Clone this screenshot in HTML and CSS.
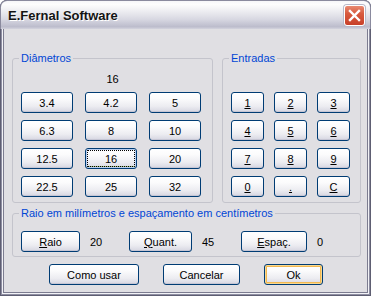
FILE: index.html
```html
<!DOCTYPE html>
<html lang="pt">
<head>
    <meta charset="UTF-8">
    <title>E.Fernal Software</title>
    <link rel="stylesheet" href="styles.css">
</head>
<body>
    <div class="window">
        <!-- Title bar -->
        <div class="titlebar">
            <span class="title">E.Fernal Software</span>
            <button class="close-btn" aria-label="Fechar">
                <svg width="13" height="13" viewBox="0 0 13 13">
                    <path d="M2 2 L11 11 M11 2 L2 11" stroke="#fff" stroke-width="2.4" stroke-linecap="square"/>
                </svg>
            </button>
        </div>

        <div class="client">
            <div class="top-row">
                <!-- Diameters -->
                <div class="group group-diam">
                    <div class="group-label">Diâmetros</div>
                    <div class="current">16</div>
                    <div class="diam-grid">
                        <button class="btn">3.4</button>
                        <button class="btn">4.2</button>
                        <button class="btn">5</button>
                        <button class="btn">6.3</button>
                        <button class="btn">8</button>
                        <button class="btn">10</button>
                        <button class="btn">12.5</button>
                        <button class="btn focused">16</button>
                        <button class="btn">20</button>
                        <button class="btn">22.5</button>
                        <button class="btn">25</button>
                        <button class="btn">32</button>
                    </div>
                </div>

                <!-- Keypad -->
                <div class="group group-keys">
                    <div class="group-label">Entradas</div>
                    <div class="key-grid">
                        <button class="btn"><u>1</u></button>
                        <button class="btn"><u>2</u></button>
                        <button class="btn"><u>3</u></button>
                        <button class="btn"><u>4</u></button>
                        <button class="btn"><u>5</u></button>
                        <button class="btn"><u>6</u></button>
                        <button class="btn"><u>7</u></button>
                        <button class="btn"><u>8</u></button>
                        <button class="btn"><u>9</u></button>
                        <button class="btn"><u>0</u></button>
                        <button class="btn"><u>.</u></button>
                        <button class="btn"><u>C</u></button>
                    </div>
                </div>
            </div>

            <!-- Radius / spacing -->
            <div class="group group-params">
                <div class="group-label">Raio em milímetros e espaçamento em centímetros</div>
                <div class="param-row">
                    <button class="btn btn-raio"><u>R</u>aio</button>
                    <span class="param-value">20</span>
                    <button class="btn btn-quant"><u>Q</u>uant.</button>
                    <span class="param-value">45</span>
                    <button class="btn btn-espac"><u>E</u>spaç.</button>
                    <span class="param-value">0</span>
                </div>
            </div>

            <div class="actions">
                <button class="btn btn-help">Como usar</button>
                <button class="btn btn-cancel">Cancelar</button>
                <button class="btn btn-ok default">Ok</button>
            </div>
        </div>
    </div>
</body>
</html>
```

FILE: styles.css
```css
/* Page */
body {
    margin: 0;
    background: #ffffff;
    font-family: "Liberation Sans", Arial, sans-serif;
    font-size: 11px;
    color: #000;
}

/* Window frame */
.window {
    width: 371px;
    height: 296px;
    box-sizing: border-box;
    display: flex;
    flex-direction: column;
    background: #e0dfe3;
    border-radius: 7px 7px 0 0;
    box-shadow: inset 0 0 0 1px #5e5e72, inset 0 0 0 2px #8e8ea2, inset 0 0 0 3px #f2f2f6, inset 0 0 0 4px #7c7c90;
    overflow: hidden;
}

/* Title bar */
.titlebar {
    height: 29px;
    flex: none;
    display: flex;
    align-items: center;
    justify-content: space-between;
    padding: 0 5px 0 7px;
    box-sizing: border-box;
    border: 1px solid #8a8a9e;
    border-bottom: none;
    border-radius: 7px 7px 0 0;
    background: linear-gradient(to bottom, #f6f6f8 0%, #fdfdfd 12%, #eeeef2 35%, #d8d8e2 65%, #bcbccc 92%, #d4d4de 100%);
}

.title {
    font-family: "Liberation Sans", Arial, sans-serif;
    font-weight: bold;
    font-size: 13px;
    color: #141414;
    text-shadow: 1px 1px 0 #ffffff;
    padding-top: 1px;
}

.close-btn {
    width: 21px;
    height: 21px;
    padding: 0;
    display: flex;
    align-items: center;
    justify-content: center;
    border: 1px solid #ffffff;
    border-radius: 3px;
    background: linear-gradient(to bottom, #e88a72 0%, #d85a3e 40%, #c8402a 100%);
    box-shadow: 0 0 0 1px #b8b8c8;
}

/* Client area */
.client {
    flex: 1;
    padding: 29px 0 0 8px;
    margin: 0 4px 4px 4px;
}

.top-row {
    display: flex;
    gap: 9px;
}

/* Group boxes */
.group {
    box-sizing: border-box;
    border: 1px solid #c4c4cc;
    border-radius: 3px;
}

.group-label {
    margin: -7px 0 0 6px;
    padding: 0 2px;
    width: fit-content;
    height: 13px;
    line-height: 13px;
    background: #e0dfe3;
    color: #0046d5;
}

.group-diam {
    width: 201px;
    height: 145px;
}

.group-keys {
    width: 139px;
    height: 145px;
}

.current {
    margin-top: 8px;
    line-height: 13px;
    text-align: center;
}

.diam-grid {
    margin: 6px 0 0 8px;
    display: grid;
    grid-template-columns: repeat(3, 52px);
    grid-auto-rows: 21px;
    column-gap: 12px;
    row-gap: 7px;
}

.key-grid {
    margin: 27px 0 0 8px;
    display: grid;
    grid-template-columns: repeat(3, 33px);
    grid-auto-rows: 21px;
    column-gap: 10px;
    row-gap: 7px;
}

/* XP style buttons */
.btn {
    box-sizing: border-box;
    height: 21px;
    padding: 0;
    font-family: "Liberation Sans", Arial, sans-serif;
    font-size: 11px;
    color: #000;
    border: 1px solid #003c74;
    border-radius: 3px;
    background: linear-gradient(to bottom, #ffffff 0%, #fbfbfc 30%, #ececf1 70%, #d6d6e1 100%);
    box-shadow: inset 0 -1px 0 #c6c6d4;
}

.btn u {
    text-underline-offset: 1px;
}

.btn.focused {
    box-shadow: inset 0 0 0 1px #b8cef0, inset 0 -2px 0 #a8c480;
    outline: 1px dotted #000;
    outline-offset: -3px;
}

.btn.default {
    box-shadow: inset 0 0 0 1px #f8d890, inset 0 0 0 2px #f2b850;
}

/* Parameters group */
.group-params {
    margin-top: 10px;
    width: 349px;
    height: 44px;
}

.param-row {
    margin: 11px 0 0 8px;
    display: flex;
    align-items: center;
}

.btn-raio { width: 59px; }
.btn-quant { width: 63px; }
.btn-espac { width: 66px; }

.param-value {
    width: 49px;
    box-sizing: border-box;
    padding-left: 10px;
}

/* Bottom buttons */
.actions {
    margin: 7px 0 0 37px;
    display: flex;
    gap: 24px;
}

.btn-help { width: 90px; }
.btn-cancel { width: 77px; }
.btn-ok { width: 59px; }
```
